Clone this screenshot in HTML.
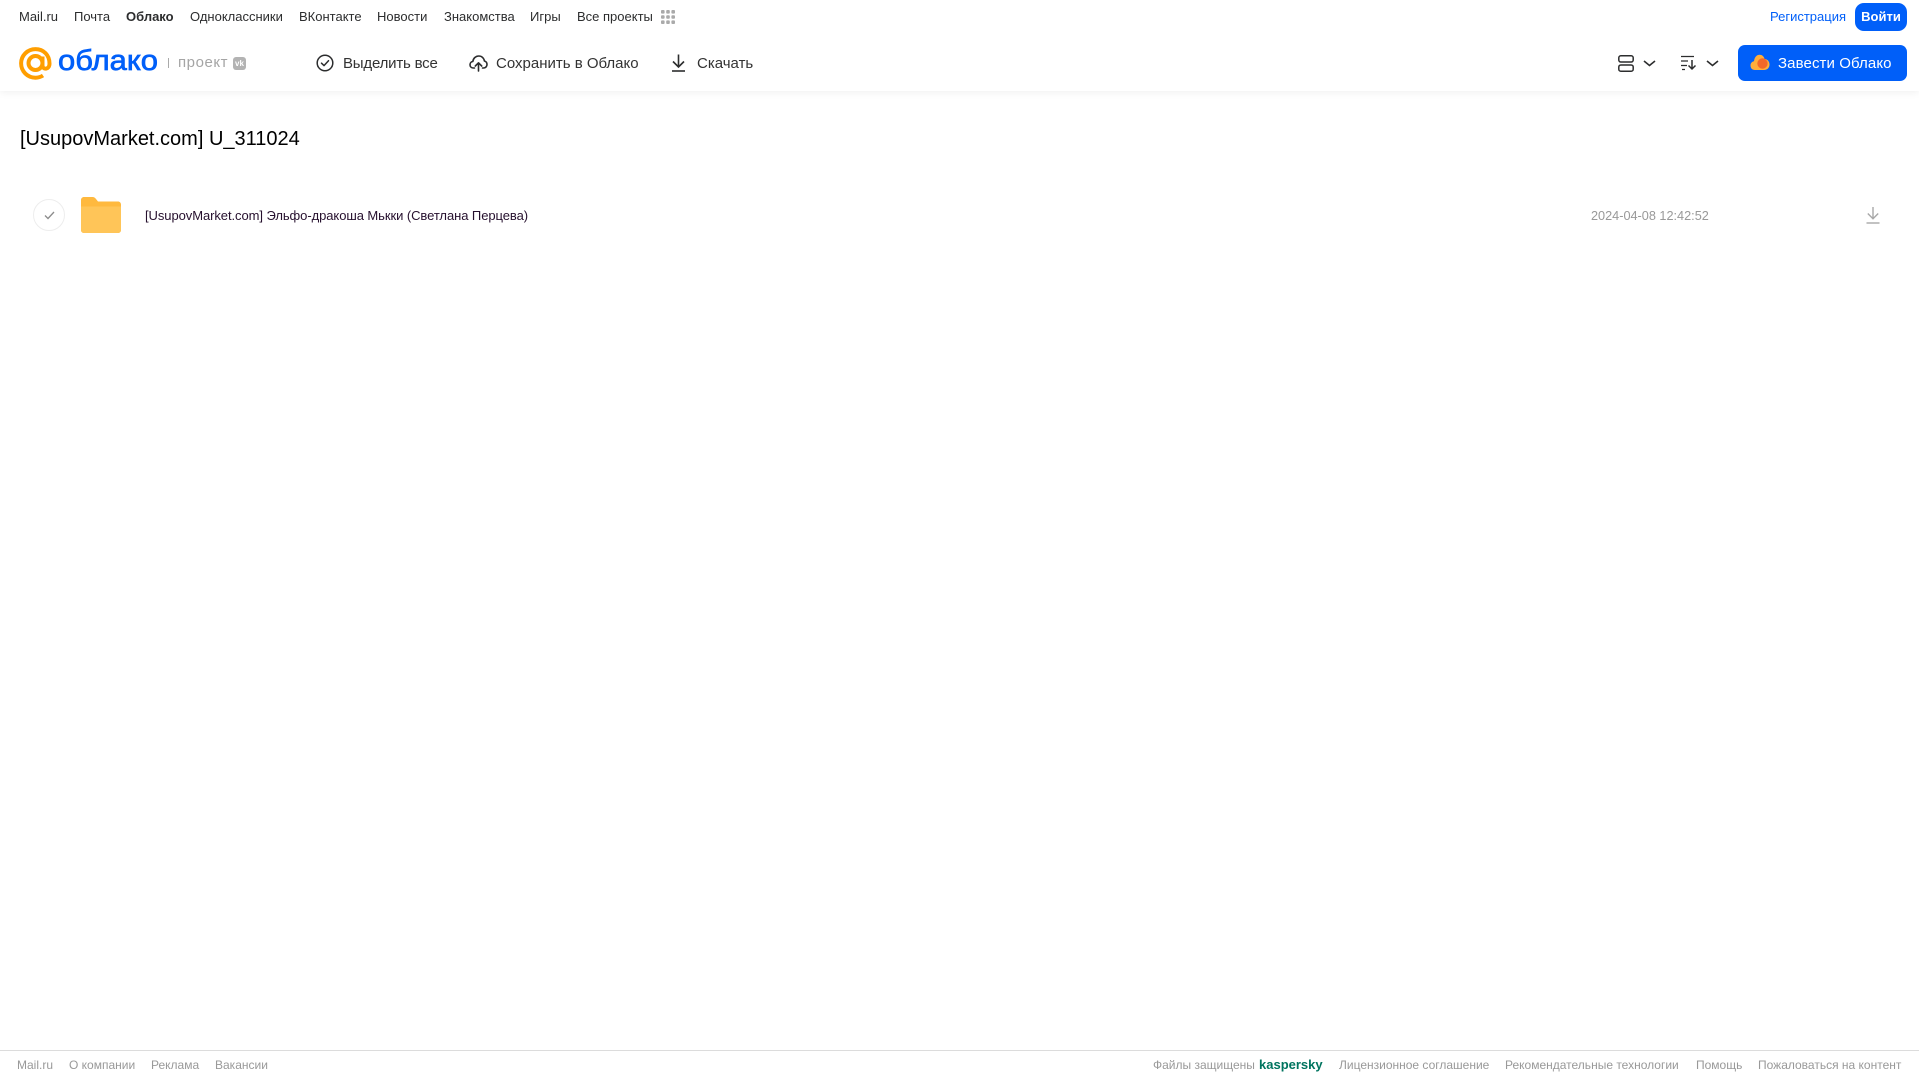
<!DOCTYPE html>
<html lang="ru"><head><meta charset="utf-8"><title>Облако</title>
<style>
html,body{margin:0;padding:0;background:#fff;width:1919px;height:1079px;overflow:hidden;font-family:"Liberation Sans",Arial,sans-serif}
.t{position:absolute;white-space:nowrap;line-height:16px;margin-top:-8px}
.n{font-size:13px;color:#2c2d2e;top:17px}
.a{font-size:15px;color:#333;top:64px}
.f{font-size:12px;color:#999;top:1065px}
svg{position:absolute;overflow:visible}
#hd{position:absolute;left:0;top:0;width:1919px;height:91px;background:#fff;box-shadow:0 1px 8px rgba(0,0,0,.07)}
.b{position:absolute;background:#005ff9;color:#fff;white-space:nowrap}
</style></head><body>
<div id="hd"></div>

<span class="t n" style="left:19px">Mail.ru</span>
<span class="t n" style="left:74px">Почта</span>
<span class="t n" style="left:126px;font-weight:bold">Облако</span>
<span class="t n" style="left:190px">Одноклассники</span>
<span class="t n" style="left:299px">ВКонтакте</span>
<span class="t n" style="left:377px">Новости</span>
<span class="t n" style="left:444px">Знакомства</span>
<span class="t n" style="left:530px">Игры</span>
<span class="t n" style="left:577px">Все проекты</span>
<svg style="left:661px;top:10px" width="14" height="14" fill="#aaa"><rect x="0" y="0" width="3.6" height="3.6" rx="1"/><rect x="5.2" y="0" width="3.6" height="3.6" rx="1"/><rect x="10.4" y="0" width="3.6" height="3.6" rx="1"/><rect x="0" y="5.2" width="3.6" height="3.6" rx="1"/><rect x="5.2" y="5.2" width="3.6" height="3.6" rx="1"/><rect x="10.4" y="5.2" width="3.6" height="3.6" rx="1"/><rect x="0" y="10.4" width="3.6" height="3.6" rx="1"/><rect x="5.2" y="10.4" width="3.6" height="3.6" rx="1"/><rect x="10.4" y="10.4" width="3.6" height="3.6" rx="1"/></svg>

<span class="t n" style="left:1770px;color:#005ff9">Регистрация</span>
<div class="b" style="left:1855px;top:3px;width:52px;height:28px;border-radius:9px;font-size:13px;font-weight:bold;line-height:28px;text-align:center">Войти</div>

<!-- logo -->
<svg style="left:19px;top:47px" width="33" height="33" viewBox="0 0 33 33" fill="none" stroke="#ff9e00" stroke-width="4"><circle cx="16.5" cy="16" r="7"/><path d="M23.5 9.500V18.500C23.500 23 30.500 23 30.500 16.500C30.500 8 24.500 2.100 16.500 2.100C8.500 2.100 2.100 8.500 2.100 16.300C2.100 24.500 8.500 30.700 16.500 30.700C19.500 30.700 21.700 30 24 28.500"/></svg>
<svg style="left:56px;top:44px" width="106" height="36"><text x="2" y="26" font-family="Liberation Sans" font-size="29" fill="#005ff9" stroke="#005ff9" stroke-width=".7" textLength="100" lengthAdjust="spacingAndGlyphs">облако</text></svg>
<div style="position:absolute;left:168px;top:58px;width:1px;height:10px;background:#aaa"></div>
<span class="t" style="left:178px;top:63px;font-size:15px;color:#a5a5a5;letter-spacing:.55px">проект</span>
<div style="position:absolute;left:233px;top:57px;width:13px;height:13px;border-radius:3px;background:#b3b3b3;color:#fff;font-size:8px;font-weight:bold;line-height:13px;text-align:center">vk</div>

<!-- actions -->
<svg style="left:316px;top:54px" width="18" height="18" viewBox="0 0 18 18" fill="none" stroke="#2c2d2e" stroke-width="1.500"><circle cx="9" cy="9" r="7.800"/><path d="M5.500 9.200L8 11.600L12.500 6.700" stroke-linecap="round" stroke-linejoin="round"/></svg>
<span class="t a" style="left:343px;letter-spacing:-.2px">Выделить все</span>
<svg style="left:469px;top:54px" width="19" height="18" viewBox="0 0 19 18" fill="none" stroke="#2c2d2e" stroke-width="1.600" stroke-linecap="round" stroke-linejoin="round"><path d="M5.500 14H4.500C2.400 14 1 12.500 1 10.700C1 9 2.200 7.700 3.800 7.500C4.300 4.200 6.800 2 9.800 2C12.700 2 15 4.100 15.400 7C17 7.400 18 8.800 18 10.500C18 12.500 16.500 14 14.500 14H13.500"/><path d="M9.500 17V9M6.300 12L9.500 8.800L12.700 12"/></svg>
<span class="t a" style="left:496px">Сохранить в Облако</span>
<svg style="left:671px;top:54px" width="15" height="18" viewBox="0 0 15 18" fill="none" stroke="#2c2d2e" stroke-width="1.600"><path d="M7.500 0.500V12.500M2 7.500L7.500 13L13 7.500"/><path d="M1 17H14"/></svg>
<span class="t a" style="left:697px">Скачать</span>

<!-- right toolbar -->
<svg style="left:1618px;top:55px" width="16" height="17" viewBox="0 0 16 17" fill="none" stroke="#2c2d2e" stroke-width="1.500"><rect x=".8" y=".8" width="14.400" height="6.200" rx="2"/><rect x=".8" y="10" width="14.400" height="6.200" rx="2"/></svg>
<svg style="left:1643px;top:60px" width="13" height="7" fill="none" stroke="#2c2d2e" stroke-width="1.600"><path d="M1 1L6.500 5.500L12 1"/></svg>
<svg style="left:1680px;top:55px" width="18" height="16" viewBox="0 0 18 16" fill="none" stroke="#2c2d2e" stroke-width="1.300"><path d="M1 1.500H14M1 6H8M1 10.500H7M2 14.500H5"/><path d="M12 5V14M8.500 10.500L12 14L15.500 10.500" stroke-width="1.500"/></svg>
<svg style="left:1706px;top:60px" width="13" height="7" fill="none" stroke="#2c2d2e" stroke-width="1.600"><path d="M1 1L6.500 5.500L12 1"/></svg>
<div class="b" style="left:1738px;top:45px;width:169px;height:36px;border-radius:7px"></div>
<svg style="left:1750px;top:54px" width="20" height="17" viewBox="0 0 20 17"><path d="M5 16C2 16 .5 14 .5 11.500C.5 9 2.300 7.500 4 7.300C4.500 3 7 .8 9.500 .8C12 .8 14 2.500 14.500 5C17.500 5 19.500 7.500 19.500 10.500C19.500 14 17 16 14 16Z" fill="#ffae3b"/><circle cx="12.500" cy="9.500" r="5.200" fill="#f2682a"/></svg>
<span class="t" style="left:1778px;top:64px;font-size:15px;color:#fff;letter-spacing:.1px">Завести Облако</span>

<!-- title -->
<span class="t" style="left:20px;top:138.500px;font-size:20px;line-height:26px;margin-top:-13px;color:#000">[UsupovMarket.com] U_311024</span>

<!-- row -->
<div style="position:absolute;left:33px;top:199px;width:30px;height:30px;border:1px solid #ededed;border-radius:50%"></div>
<svg style="left:43.500px;top:211px" width="11" height="9" fill="none" stroke="#8c8c8c" stroke-width="1.300"><path d="M1 4.500L4 7.500L10 1"/></svg>
<svg style="left:81px;top:197px" width="40" height="36" viewBox="0 0 40 36"><path d="M0 3C0 1.300 1.300 0 3 0H11.500C13 0 14 .7 15 2L17 4.500H37C38.700 4.500 40 5.800 40 7.500V33C40 34.700 38.700 36 37 36H3C1.300 36 0 34.700 0 33Z" fill="#ffb93e"/><path d="M0 9.500H40V33C40 34.700 38.700 36 37 36H3C1.300 36 0 34.700 0 33Z" fill="#ffc558"/></svg>
<span class="t" style="left:145px;top:216px;font-size:13px;letter-spacing:-.07px;color:#26102e">[UsupovMarket.com] Эльфо-дракоша Мькки (Светлана Перцева)</span>
<span class="t" style="left:1591px;top:216px;font-size:12.700px;color:#999">2024-04-08 12:42:52</span>
<svg style="left:1866px;top:207px" width="14" height="17" viewBox="0 0 14 17" fill="none" stroke="#a8a8a8" stroke-width="1.400"><path d="M7 0V11.500M1.800 6.500L7 11.800L12.200 6.500"/><path d="M.5 16H13.500"/></svg>

<!-- footer -->
<div style="position:absolute;left:0;top:1050px;width:1919px;height:1px;background:#dcdcdc"></div>
<span class="t f" style="left:17px">Mail.ru</span>
<span class="t f" style="left:69px">О компании</span>
<span class="t f" style="left:151px">Реклама</span>
<span class="t f" style="left:215px">Вакансии</span>
<span class="t f" style="left:1153px">Файлы защищены</span>
<span class="t f" style="left:1259px;font-size:13px;font-weight:bold;color:#00745f">kaspersky</span>
<span class="t f" style="left:1339px">Лицензионное соглашение</span>
<span class="t f" style="left:1505px">Рекомендательные технологии</span>
<span class="t f" style="left:1696px">Помощь</span>
<span class="t f" style="left:1758px">Пожаловаться на контент</span>
</body></html>
